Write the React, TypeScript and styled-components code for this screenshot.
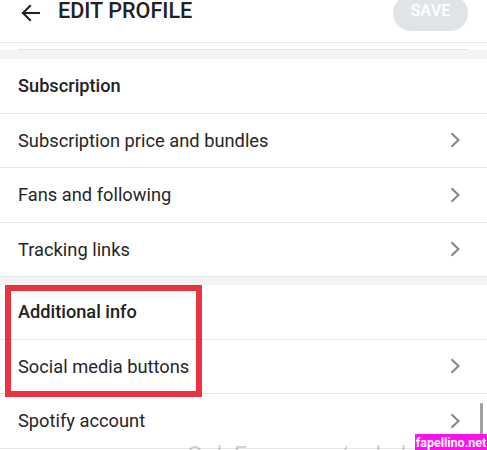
import React from "react";
import styled, { createGlobalStyle } from "styled-components";

const Global = createGlobalStyle`
  html, body { margin: 0; padding: 0; background: #ffffff; }
  body { font-family: Roboto, "Noto Sans", Arial, sans-serif; color: #232323; }
  #root { width: 487px; height: 450px; overflow: hidden; }
`;

const Page = styled.div`
  position: relative;
  width: 487px;
  height: 450px;
  overflow: hidden;
  background: #fff;
`;

const Header = styled.header`
  display: flex;
  align-items: flex-start;
  height: 42px;
  border-bottom: 1px solid #e6e6e6;
  padding: 0 19px 0 21px;
`;

const BackButton = styled.button`
  display: flex;
  border: 0;
  background: none;
  padding: 0;
  margin-top: 4px;
  width: 20px;
  height: 18px;
  color: #222;
`;

const Title = styled.h1`
  margin: 0 0 0 17px;
  font-size: 21.6px;
  font-weight: 500;
  line-height: 22px;
  color: #222;
  flex: 1;
`;

const SaveButton = styled.button`
  margin-top: -5px;
  width: 75px;
  height: 36px;
  border: 0;
  border-radius: 18px;
  background: #dfe5e6;
  color: #fff;
  font-family: Roboto, Arial, sans-serif;
  font-size: 16.5px;
  font-weight: 500;
  padding: 0 0 6px;
`;

const Stub = styled.div`
  height: 7px;
  margin: 0 19px 0 18px;
  border-bottom: 1px solid #e4e4e4;
  box-sizing: border-box;
`;

const Band = styled.div<{ $h: number }>`
  height: ${(p) => p.$h}px;
  background: #f4f4f4;
`;

const SectionTitle = styled.div`
  box-sizing: border-box;
  height: 54.5px;
  display: flex;
  align-items: center;
  padding-left: 18px;
  font-size: 18.2px;
  font-weight: 500;
  color: #222;
  border-bottom: 1px solid #e6e6e6;
`;

const Row = styled.div`
  box-sizing: border-box;
  height: 54.5px;
  display: flex;
  align-items: center;
  justify-content: space-between;
  padding: 0 26px 0 18px;
  font-size: 18.3px;
  font-weight: 400;
  color: #262626;
  border-bottom: 1px solid #e6e6e6;
`;

const Chevron = styled.svg`
  width: 11px;
  height: 16px;
  color: #858585;
`;

const Highlight = styled.div`
  position: absolute;
  left: 5px;
  top: 285px;
  width: 197px;
  height: 112px;
  box-sizing: border-box;
  border: 6.5px solid #e8343f;
  pointer-events: none;
`;

const Watermark = styled.div`
  position: absolute;
  left: 187px;
  top: 443px;
  font-size: 23px;
  line-height: 26px;
  color: rgba(0, 0, 0, 0.2);
  letter-spacing: 0.5px;
  white-space: nowrap;
`;

const Badge = styled.div`
  position: absolute;
  right: 0;
  top: 434px;
  width: 72px;
  height: 17px;
  background: #ff10f0;
  color: #fff;
  font-family: Roboto, Arial, sans-serif;
  font-size: 12.5px;
  font-weight: 700;
  line-height: 17px;
  white-space: nowrap;
  text-align: center;
`;

const Scrollbar = styled.div`
  position: absolute;
  left: 480px;
  top: 403px;
  width: 3px;
  height: 38px;
  background: #a0a0a0;
  border-radius: 1px;
`;

const Arrow = () => (
  <svg width="20" height="18" viewBox="0 0 20 18" fill="none" stroke="currentColor" strokeWidth="2.1" strokeLinecap="square">
    <path d="M2 9 H18" />
    <path d="M9 2 L2 9 L9 16" strokeLinejoin="miter" />
  </svg>
);

const Chev = () => (
  <Chevron viewBox="0 0 11 16" fill="none" stroke="currentColor" strokeWidth="2">
    <path d="M1.5 1.2 L8.5 8 L1.5 14.8" />
  </Chevron>
);

const subscriptionItems = ["Subscription price and bundles", "Fans and following", "Tracking links"];

export default function App() {
  return (
    <Page>
      <Global />
      <Header>
        <BackButton aria-label="Back">
          <Arrow />
        </BackButton>
        <Title>EDIT PROFILE</Title>
        <SaveButton>SAVE</SaveButton>
      </Header>
      <Stub />
      <Band $h={9} />
      <SectionTitle>Subscription</SectionTitle>
      {subscriptionItems.map((t) => (
        <Row key={t}>
          <span>{t}</span>
          <Chev />
        </Row>
      ))}
      <Band $h={8} />
      <SectionTitle>Additional info</SectionTitle>
      <Row>
        <span>Social media buttons</span>
        <Chev />
      </Row>
      <Row>
        <span>Spotify account</span>
        <Chev />
      </Row>
      <Highlight />
      <Watermark>OnlyFans.com/onlydelicia</Watermark>
      <Scrollbar />
      <Badge>fapellino.net</Badge>
    </Page>
  );
}
